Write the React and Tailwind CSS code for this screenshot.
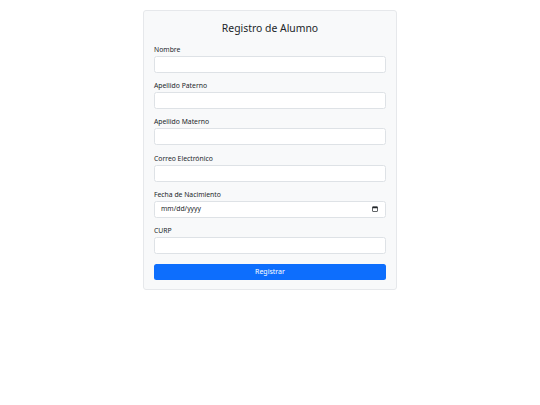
import React from "react";

const fields = [
  { label: "Nombre", type: "text" },
  { label: "Apellido Paterno", type: "text" },
  { label: "Apellido Materno", type: "text" },
  { label: "Correo Electrónico", type: "email" },
  { label: "Fecha de Nacimiento", type: "date" },
  { label: "CURP", type: "text" },
];

function CalendarIcon() {
  return (
    <svg width="6" height="6" viewBox="0 0 12 12" className="block">
      <rect x="1" y="1.5" width="10" height="9.5" rx="1" fill="none" stroke="#212529" strokeWidth="1.4" />
      <rect x="1" y="1.5" width="10" height="3" fill="#212529" />
    </svg>
  );
}

export default function App() {
  return (
    <div className="min-h-screen bg-white font-['Noto_Sans',sans-serif] text-[#212529]">
      <div className="mx-auto mt-[10px] w-[254px] rounded-[3px] border border-[#e6e8eb] bg-[#f8f9fa] px-[10px] pt-[10px] pb-[8.5px]">
        <h2 className="mb-[10px] text-center text-[10.4px] leading-[14px] font-normal">
          Registro de Alumno
        </h2>
        {fields.map((f) => (
          <div key={f.label} className="mb-[8.2px]">
            <label className="mb-[2px] block text-[6.8px] leading-[9px]">{f.label}</label>
            {f.type === "date" ? (
              <div className="flex h-[17px] w-full items-center justify-between rounded-[2.5px] border border-[#dee2e6] bg-white pl-[6px] pr-[7px] text-[6.8px] text-[#212529]">
                <span>mm/dd/yyyy</span>
                <CalendarIcon />
              </div>
            ) : (
              <input
                type={f.type}
                className="block h-[17px] w-full rounded-[2.5px] border border-[#dee2e6] bg-white px-[5px] text-[7px] text-[#212529] outline-none"
              />
            )}
          </div>
        ))}
        <button className="mt-[10px] block h-[16.5px] w-full rounded-[2.5px] bg-[#0d6efd] text-[7px] leading-[16px] text-white">
          Registrar
        </button>
      </div>
    </div>
  );
}
